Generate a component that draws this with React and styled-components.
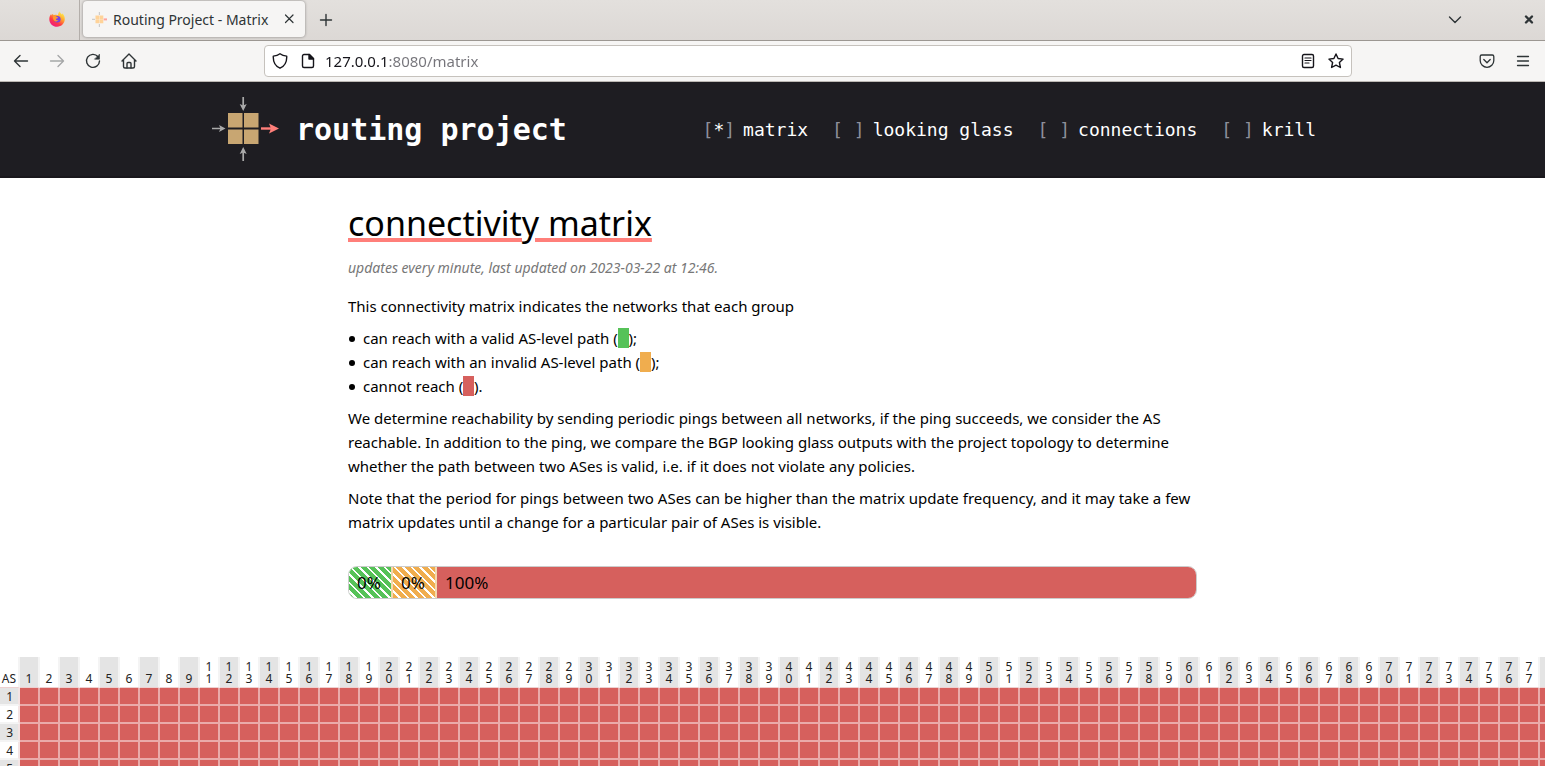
import React from 'react';
import styled, { createGlobalStyle } from 'styled-components';

const sans = '"Noto Sans", "Open Sans", sans-serif';
const mono = '"DejaVu Sans Mono", "Liberation Mono", monospace';
const green = '#56c258';
const amber = '#f0ad4e';
const red = '#d6605d';

const GlobalStyle = createGlobalStyle`
  *, *::before, *::after { box-sizing: border-box; }
  body { margin: 0; background: #fff; color: #000; font-family: ${sans}; font-size: 15px; }
`;

const Browser = styled.div`
  display: flex;
  flex-direction: column;
  height: 100vh;
  overflow: hidden;
`;

const TabStrip = styled.div`
  display: flex;
  align-items: stretch;
  height: 41px;
  flex: none;
  color: #2e3436;
  background: linear-gradient(#e3e0dd, #dcd8d5);
  border-bottom: 1px solid #9c9792;
`;

const PinnedTab = styled.button`
  display: flex;
  align-items: center;
  justify-content: flex-end;
  width: 80px;
  padding: 0 14px 2px 0;
  border: 0;
  border-right: 1px solid #b3aeaa;
  background: none;
`;

const Tab = styled.div`
  display: flex;
  align-items: center;
  width: 222px;
  height: 36px;
  margin: 1px 8px 0 3px;
  padding: 0 8px 0 9px;
  gap: 6px;
  border-radius: 4px;
  background: #f6f5f4;
  box-shadow: 0 0 3px rgba(0, 0, 0, 0.4);
  font-size: 14px;
`;

const TabTitle = styled.span`
  flex: 1;
  white-space: nowrap;
`;

const IconButton = styled.button`
  display: flex;
  align-items: center;
  justify-content: center;
  flex: none;
  width: ${p => p.$width || 36}px;
  padding: 0;
  border: 0;
  background: none;
  opacity: ${p => (p.disabled ? 0.4 : 1)};
  color: #2e3436;
`;

const Spacer = styled.div`
  flex: ${p => (p.$width ? `0 0 ${p.$width}px` : '1')};
`;

const Toolbar = styled.div`
  display: flex;
  align-items: center;
  height: 41px;
  flex: none;
  padding: 0 4px 0 3px;
  background: #f6f5f4;
  border-bottom: 1px solid #bcb8b4;
`;

const AddressBar = styled.label`
  display: flex;
  align-items: center;
  flex: 1;
  height: 32px;
  margin: 0 117px 0 117px;
  padding: 0 7px;
  gap: 12px;
  border: 1px solid #c6c2bd;
  border-radius: 4px;
  background: #fff;
  color: #15141a;
`;

const AddressInput = styled.input`
  flex: 1;
  min-width: 0;
  height: 24px;
  margin-left: -3px;
  padding: 0;
  border: 0;
  outline: 0;
  font-family: ${sans};
  font-size: 15px;
  color: transparent;
  background: linear-gradient(to right, #15141a 64px, #75747a 64px);
  background-clip: text;
  -webkit-background-clip: text;
`;

const Page = styled.div`
  flex: 1;
  min-height: 0;
  overflow: hidden;
`;

const SiteHeader = styled.header`
  height: 96px;
  background: #1e1d22;
  border-bottom: 2px solid #19171c;
`;

const HeaderInner = styled.div`
  display: flex;
  align-items: center;
  justify-content: space-between;
  max-width: 1121px;
  height: 95px;
  margin: 0 auto;
  padding-right: 17px;
`;

const Brand = styled.a`
  display: flex;
  align-items: center;
  gap: 17px;
  color: #fff;
  text-decoration: none;
  font: bold 30px ${mono};
`;

const Nav = styled.nav`
  display: flex;
  gap: 24px;
`;

const NavLink = styled.a`
  display: flex;
  gap: 8px;
  color: #fff;
  text-decoration: none;
  white-space: pre;
  font: 18px ${mono};
`;

const Bracket = styled.span`
  color: #8d8f9a;
`;

const Main = styled.main`
  max-width: 849px;
  margin: 0 auto;
  padding-top: 16px;
  line-height: 24px;
`;

const Title = styled.h1`
  margin: 5px 0 9px;
  font-size: 34px;
  font-weight: 400;
  line-height: 48px;
  text-decoration: underline 4px #ff7f7a;
  text-underline-offset: 2px;
`;

const Updated = styled.p`
  margin: 0 0 14px;
  font-size: 14px;
  font-style: italic;
  color: #777;
`;

const Paragraph = styled.p`
  margin: 0 0 8px;
`;

const List = styled.ul`
  margin: 0 0 8px;
  padding: 0;
  list-style: none;
`;

const ListItem = styled.li`
  display: flex;
  align-items: center;
  gap: 8px;

  &::before {
    content: '';
    width: 6px;
    height: 6px;
    margin: 2px 0 0 1px;
    border-radius: 50%;
    background: #000;
  }
`;

const Swatch = styled.span`
  padding: 0 4px 0 3px;
  background: ${p => p.$color};
`;

const Progress = styled.div`
  display: flex;
  height: 33px;
  margin: 32px 0 58px;
  overflow: hidden;
  border: 1px solid #ccc;
  border-radius: 9px;
  font-size: 17px;
  line-height: 32px;
`;

const Segment = styled.div`
  flex: ${p => (p.$fill ? '1' : 'none')};
  width: 44px;
  padding-left: 8px;
  border-right: ${p => (p.$fill ? '0' : '2px solid #f3d9ae')};
  background: ${p =>
    p.$fill
      ? p.$color
      : `repeating-linear-gradient(45deg, ${p.$color} 0 4px, #fff 4px 6px)`};
`;

const Matrix = styled.table`
  width: max-content;
  table-layout: fixed;
  border-spacing: 0;
  font-size: 12px;
  line-height: 12px;
  color: #222;

  th { font-weight: 400; }
`;

const ColumnHead = styled.th`
  width: 20px;
  height: 31px;
  padding: 0 0 2px;
  vertical-align: bottom;
  text-align: center;
  border-right: 2px solid #f4f4f4;
  border-bottom: 1px solid #eed0d0;
  background: ${p => (p.$shaded ? '#e4e4e4' : '#fff')};
`;

const Digits = styled.span`
  display: block;
  width: 8px;
  margin: 0 auto;
  word-break: break-all;
`;

const RowHead = styled.th`
  height: 18px;
  padding: 2px 5px 0 0;
  text-align: right;
  border-right: 2px solid #f4e4e4;
  border-bottom: 2px solid #f4f4f4;
  background: ${p => (p.$shaded ? '#e4e4e4' : '#fff')};
`;

const Cell = styled.td`
  padding: 0;
  border-right: 2px solid #eaabaa;
  border-bottom: 2px solid #eaabaa;
  background: ${red};
`;

const Icon = ({ size = 16, children, width = 1.4 }) => (
  <svg
    width={size}
    height={size}
    viewBox="0 0 16 16"
    fill="none"
    stroke="currentColor"
    strokeWidth={width}
    strokeLinecap="round"
    strokeLinejoin="round"
    aria-hidden="true"
  >
    {children}
  </svg>
);

const FirefoxLogo = () => (
  <svg width="16" height="16" viewBox="0 0 16 16" aria-hidden="true">
    <defs>
      <linearGradient id="flame" x1="0.85" y1="0.05" x2="0.25" y2="0.95">
        <stop offset="0" stopColor="#fff44f" />
        <stop offset="0.4" stopColor="#ffa02e" />
        <stop offset="0.7" stopColor="#ff3b45" />
        <stop offset="1" stopColor="#ee1b80" />
      </linearGradient>
    </defs>
    <path
      d="M10.5.3c.4 1.4 1.4 2.2 2.4 3.1.3-.2.3-.7.2-1.2 1.7 1.2 2.7 3.4 2.7 5.9 0 4.3-3.4 7.7-7.7 7.7S.3 12.5.3 8.2c0-2 .7-3.900 1.900-5.200l.1 1.400c.5-.7 1.100-1.100 1.800-1.400 0 .5.2 1 .5 1.300C7 3.300 8.600 4 9 4.200c.3-1.500.6-2.700 1.500-3.900z"
      fill="url(#flame)"
    />
    <circle cx="8.3" cy="8.3" r="3.3" fill="#7542e5" />
    <path d="M4.2 5c1.7-.5 2.8 0 3.5.9.8.1 1.3.3 1.3.8-.4.9-1.9.7-2.1 1.5.3 1 1.6 1.3 2.7.8-.8 1.8-3.6 1.9-4.8.2C4 8 3.7 6.3 4.2 5z" fill="#ff9a2e" />
  </svg>
);

const RouterMark = ({ size = 67 }) => (
  <svg width={size} height={size} viewBox="0 0 67 67" aria-hidden="true">
    <path d="M16 17h14.500v14.500H16zM32 17h14.500v14.500H32zM16 33.500h14.500V48H16zM32 33.500h14.500V48H32z" fill="#c8a672" />
    <path d="M31.200 1v11M31.200 65V54M0 32.500h11" stroke="#aaa" strokeWidth="1.700" fill="none" />
    <path d="M27.700 8l3.500 1.500L34.700 8l-3.500 7zM27.700 58l3.500-1.500 3.500 1.500-3.500-7zM7 29l1.500 3.500L7 36l6.500-3.500z" fill="#aaa" />
    <path d="M49 32.500h11" stroke="#ff7f7a" strokeWidth="2.400" />
    <path d="M57 27.500l2 5-2 5 10-5z" fill="#ff7f7a" />
  </svg>
);

const Favicon = () => (
  <svg width="15" height="15" viewBox="0 0 15 15" aria-hidden="true">
    <path d="M3.500 3.500h3.700v3.700H3.500zM7.600 3.500h3.700v3.700H7.600zM3.500 7.600h3.700v3.700H3.500zM7.600 7.600h3.700v3.700H7.600z" fill="#ffd399" />
    <path d="M7.400 0v3M7.400 12v3M0 7.400h3" stroke="#ccc" strokeWidth="1.200" />
    <path d="M11.700 7.400H15" stroke="#ffa49e" strokeWidth="2" />
  </svg>
);

const columns = [1, 2, 3, 4, 5, 6, 7, 8, 9];
for (let n = 11; n <= 78; n += 1) columns.push(n);
const rows = columns.slice(0, 5);
const links = ['matrix', 'looking glass', 'connections', 'krill'];

export default function App() {
  return (
    <Browser>
      <GlobalStyle />
      <TabStrip>
        <PinnedTab aria-label="Firefox View"><FirefoxLogo /></PinnedTab>
        <Tab>
          <Favicon />
          <TabTitle>Routing Project - Matrix</TabTitle>
          <IconButton $width={16} aria-label="Close tab">
            <Icon width={1.2}><path d="M4.500 4l7.500 7.500M12 4l-7.500 7.500" /></Icon>
          </IconButton>
        </Tab>
        <IconButton $width={26} aria-label="New tab">
          <Icon><path d="M8 2.500v11M2.500 8h11" /></Icon>
        </IconButton>
        <Spacer />
        <IconButton aria-label="List all tabs">
          <Icon><path d="M2.500 5L8 10.500 13.500 5" /></Icon>
        </IconButton>
        <Spacer $width={40} />
        <IconButton $width={32} aria-label="Close window">
          <Icon width={2.4}><path d="M5 4.500l6 6M11 4.500l-6 6" /></Icon>
        </IconButton>
      </TabStrip>

      <Toolbar>
        <IconButton aria-label="Back">
          <Icon><path d="M14.500 8H1.500M7 2.500L1.500 8 7 13.500" /></Icon>
        </IconButton>
        <IconButton disabled aria-label="Forward">
          <Icon><path d="M1.500 8h13M9 2.500L14.500 8 9 13.500" /></Icon>
        </IconButton>
        <IconButton aria-label="Reload">
          <Icon>
            <path d="M13 3.700A6.500 6.500 0 1 0 14.500 8" />
            <path d="M14.500 1.500v4.700H9.800z" fill="currentColor" strokeWidth="0.6" />
          </Icon>
        </IconButton>
        <IconButton aria-label="Home">
          <Icon>
            <path d="M1 8l7-7 7 7M2.500 7v6.500a1.500 1.500 0 0 0 1.500 1.500h8a1.500 1.500 0 0 0 1.500-1.500V7" />
            <path d="M6 15v-4.500a1 1 0 0 1 1-1h2a1 1 0 0 1 1 1V15" />
          </Icon>
        </IconButton>
        <AddressBar>
          <Icon><path d="M8 .8c2 1.500 4.200 2.100 6.700 2.300.3 5.300-1.600 9.800-6.700 12.100C2.900 12.900 1 8.400 1.300 3.100 3.800 2.900 6 2.300 8 .8z" /></Icon>
          <Icon>
            <path d="M9.500 1.500H4A1.500 1.500 0 0 0 2.500 3v10A1.500 1.500 0 0 0 4 14.500h8a1.500 1.500 0 0 0 1.500-1.500V5.500z" />
            <path d="M9 1.500v4.500h4.500z" fill="currentColor" />
          </Icon>
          <AddressInput aria-label="Address" defaultValue="127.0.0.1:8080/matrix" />
          <Icon>
            <rect x="2.500" y="1.500" width="11" height="13" rx="1.500" />
            <path d="M5 5h6M5 7.500h6M5 10h4" strokeWidth="1.2" />
          </Icon>
          <Icon><path d="M8 1l2.100 4.500 5 .6-3.700 3.400 1 5L8 12.100 3.600 14.500l1-5L.9 6.100l5-.6z" /></Icon>
        </AddressBar>
        <IconButton aria-label="Save to Pocket">
          <Icon width={1.3}>
            <path d="M2.700 2h10.600a1.500 1.500 0 0 1 1.500 1.500V7.500a6.800 6.800 0 0 1-13.600 0V3.500A1.500 1.500 0 0 1 2.700 2z" />
            <path d="M4.800 6.500L8 9.700l3.200-3.200" />
          </Icon>
        </IconButton>
        <IconButton aria-label="Menu">
          <Icon width={1.3}><path d="M2.500 3.500h11M2.500 8h11M2.500 12.500h11" /></Icon>
        </IconButton>
      </Toolbar>

      <Page>
        <SiteHeader>
          <HeaderInner>
            <Brand href="#">
              <RouterMark />
              routing project
            </Brand>
            <Nav>
              {links.map((label, i) => (
                <NavLink href={`#${label}`} key={label}>
                  <span>
                    <Bracket>[</Bracket>
                    {i === 0 ? '*' : ' '}
                    <Bracket>]</Bracket>
                  </span>
                  {label}
                </NavLink>
              ))}
            </Nav>
          </HeaderInner>
        </SiteHeader>

        <Main>
          <Title>connectivity matrix</Title>
          <Updated>updates every minute, last updated on 2023-03-22 at 12:46.</Updated>
          <Paragraph>This connectivity matrix indicates the networks that each group</Paragraph>
          <List>
            <ListItem>
              <span>can reach with a valid AS-level path (<Swatch $color={green}>&nbsp;</Swatch>);</span>
            </ListItem>
            <ListItem>
              <span>can reach with an invalid AS-level path (<Swatch $color={amber}>&nbsp;</Swatch>);</span>
            </ListItem>
            <ListItem>
              <span>cannot reach (<Swatch $color={red}>&nbsp;</Swatch>).</span>
            </ListItem>
          </List>
          <Paragraph>
            We determine reachability by sending periodic pings between all networks, if the ping
            succeeds, we consider the AS reachable. In addition to the ping, we compare the BGP
            looking glass outputs with the project topology to determine whether the path between
            two ASes is valid, i.e. if it does not violate any policies.
          </Paragraph>
          <Paragraph>
            Note that the period for pings between two ASes can be higher than the matrix update
            frequency, and it may take a few matrix updates until a change for a particular pair of
            ASes is visible.
          </Paragraph>
          <Progress>
            <Segment $color={green}>0%</Segment>
            <Segment $color={amber}>0%</Segment>
            <Segment $color={red} $fill>100%</Segment>
          </Progress>
        </Main>

        <Matrix>
          <thead>
            <tr>
              <ColumnHead scope="col">AS</ColumnHead>
              {columns.map((n, i) => (
                <ColumnHead scope="col" key={n} $shaded={i % 2 === 0}>
                  <Digits>{n}</Digits>
                </ColumnHead>
              ))}
            </tr>
          </thead>
          <tbody>
            {rows.map((r, i) => (
              <tr key={r}>
                <RowHead scope="row" $shaded={i % 2 === 0}>{r}</RowHead>
                {columns.map(n => <Cell key={n} />)}
              </tr>
            ))}
          </tbody>
        </Matrix>
      </Page>
    </Browser>
  );
}
